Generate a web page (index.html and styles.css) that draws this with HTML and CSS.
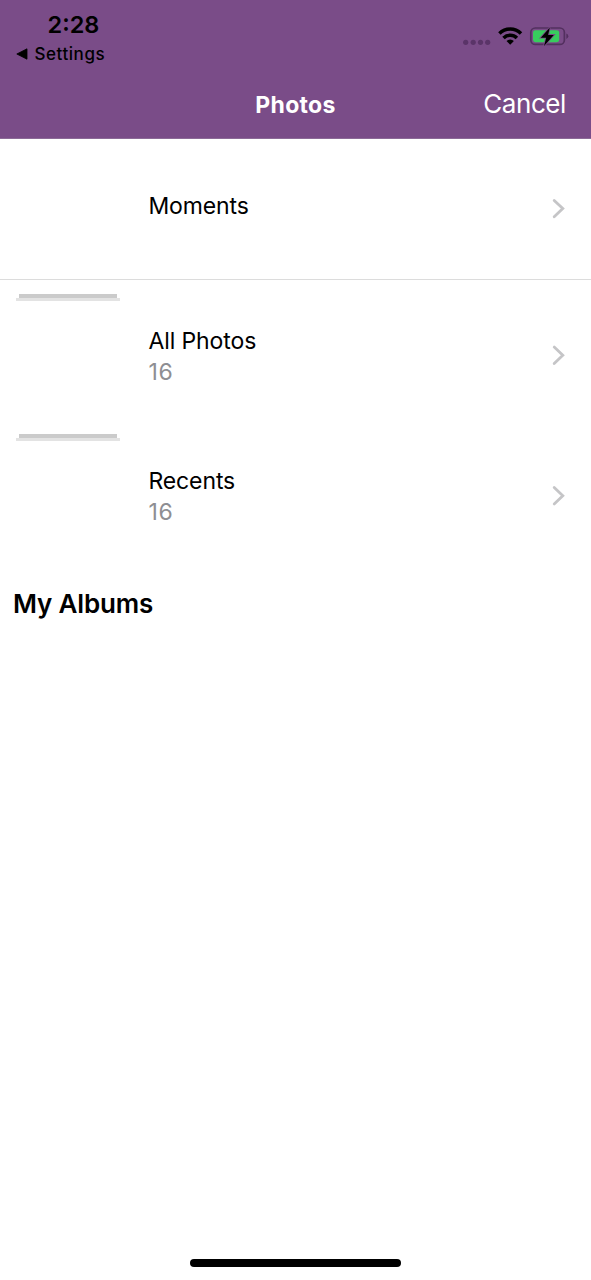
FILE: index.html
```html
<!DOCTYPE html>
<html lang="en">
<head>
<meta charset="utf-8">
<title>Photos</title>
<link rel="stylesheet" href="styles.css">
</head>
<body>
<div class="screen">
  <header class="header">
    <div class="status">
      <div class="status-left">
        <div class="time">2:28</div>
        <div class="back">
          <svg class="back-arrow" width="12" height="12" viewBox="0 0 12 12"><path d="M.8 6 11 .8v10.400z" fill="#000" stroke="#000" stroke-width=".8" stroke-linejoin="round"/></svg>
          <span class="back-label">Settings</span>
        </div>
      </div>
      <svg class="status-icons" width="108" height="24" viewBox="462 24 108 24">
        <g fill="#5a3468"><circle cx="465.700" cy="42.300" r="2.600"/><circle cx="473.200" cy="42.300" r="2.600"/><circle cx="480.500" cy="42.300" r="2.600"/><circle cx="487.700" cy="42.300" r="2.600"/></g>
        <g fill="none" stroke="#000" stroke-width="3.500"><path d="M499.400 33.500a15.400 15.400 0 0 1 21.600 0"/><path d="M503.500 37.900a9.600 9.600 0 0 1 13.400 0"/></g>
        <path d="M506.500 41.100a5.300 5.300 0 0 1 7.400 0L510.200 44.700z" fill="#000"/>
        <rect x="530.800" y="28" width="33.600" height="16.400" rx="4.500" fill="none" stroke="#53305f" stroke-width="1.700"/>
        <path d="M566.300 33.500q2 .8 2 2.700t-2 2.700z" fill="#53305f"/>
        <rect x="533" y="30.200" width="26.200" height="12" rx="2.400" fill="#37cd5d"/>
        <path d="M549.800 27.600 540.800 37.700h5.400l-2.200 8.200 9.800-11h-5.700z" fill="#000" stroke="#7a4c88" stroke-width="1.700" paint-order="stroke"/>
      </svg>
    </div>
    <nav class="nav">
      <h1 class="nav-title">Photos</h1>
      <a class="cancel">Cancel</a>
    </nav>
  </header>

  <main class="list">
    <div class="row row-moments">
      <div class="thumb"></div>
      <div class="info"><div class="name moments">Moments</div></div>
      <svg class="chevron" width="14" height="22" viewBox="0 0 14 22"><path d="m2.200 2.400 8.600 8.200-8.600 8.200"/></svg>
    </div>
    <div class="row row-all">
      <div class="thumb stack"></div>
      <div class="info"><div class="name all">All Photos</div><div class="count">16</div></div>
      <svg class="chevron" width="14" height="22" viewBox="0 0 14 22"><path d="m2.200 2.100 8.600 8.200-8.600 8.200"/></svg>
    </div>
    <div class="row">
      <div class="thumb stack"></div>
      <div class="info"><div class="name recents">Recents</div><div class="count">16</div></div>
      <svg class="chevron" width="14" height="22" viewBox="0 0 14 22"><path d="m2.200 2.500 8.600 8.200-8.600 8.200"/></svg>
    </div>
    <h2 class="section">My Albums</h2>
  </main>

  <footer class="home"><div class="home-bar"></div></footer>
</div>
</body>
</html>
```
FILE: styles.css
```css
* { box-sizing: border-box; }

body {
  margin: 0;
  background: #fff;
  color: #000;
  font-family: Inter, "Liberation Sans", sans-serif;
}

.screen {
  display: flex;
  flex-direction: column;
  width: 591px;
  height: 1280px;
  overflow: hidden;
}

.header {
  height: 139px;
  background: #7a4c88;
  border-bottom: 1px solid #8c6a97;
}

.status {
  display: flex;
  justify-content: space-between;
  height: 71px;
  padding: 11px 21px 0 16px;
}

.time {
  padding-left: 31.500px;
  font-size: 23.5px;
  font-weight: 600;
  line-height: 28px;
}

.back {
  display: flex;
  align-items: center;
  gap: 6.5px;
  margin-top: 5px;
}

.back-label {
  font-size: 17px;
  font-weight: 500;
  line-height: 20px;
  letter-spacing: 0.55px;
}

.status-icons { margin-top: 13px; }

.nav {
  display: grid;
  grid-template-columns: 1fr auto 1fr;
  align-items: baseline;
  height: 67px;
  padding: 17px 25px 0;
  color: #fff;
}

.nav-title {
  grid-column: 2;
  margin: 0;
  font-size: 23px;
  font-weight: 700;
  line-height: 32px;
  letter-spacing: 0.3px;
}

.cancel {
  justify-self: end;
  font-size: 26px;
  line-height: 32px;
  letter-spacing: -0.4px;
}

.list { flex: 1; }

.row {
  display: flex;
  align-items: center;
  height: 140px;
  padding: 0 25px 0 16px;
}

.row-moments {
  height: 141px;
  border-bottom: 1px solid #dcdcdc;
}

.row-all { margin-top: 6px; }

.thumb {
  align-self: flex-start;
  flex: none;
  width: 104px;
  height: 104px;
}

.stack { padding-top: 8px; }

.stack::before,
.stack::after {
  content: "";
  display: block;
  height: 4px;
  margin: 0 3px;
  background: #cbcbcb;
}

.stack::after {
  height: 3px;
  margin: 0;
  background: #e3e3e3;
}

.info {
  flex: 1;
  padding-left: 28.4px;
}

.name,
.count {
  font-size: 23px;
  line-height: 32px;
  letter-spacing: -0.1px;
}

.name { padding-top: 1px; }

.count {
  color: #8e8e93;
  line-height: 31px;
  letter-spacing: 0.8px;
}

.moments {
  margin-top: -6px;
  padding-top: 0;
}

.chevron {
  flex: none;
  fill: none;
  stroke: #c5c5c7;
  stroke-width: 2.8;
  stroke-linecap: round;
}

.section {
  margin: 22px 0 0 13px;
  font-size: 26px;
  font-weight: 600;
  line-height: 32px;
  letter-spacing: -0.15px;
}

.home {
  display: flex;
  justify-content: center;
  padding: 0 0 13px;
}

.home-bar {
  width: 211px;
  height: 8px;
  border-radius: 4px;
  background: #000;
}
```
